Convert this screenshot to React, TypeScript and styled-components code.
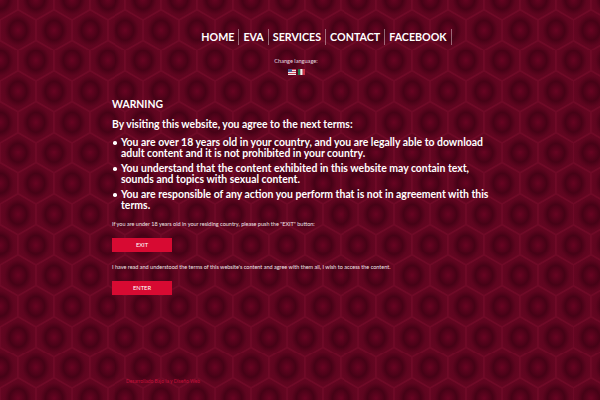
import React from "react";
import styled, { createGlobalStyle } from "styled-components";

const hexCentres = [
  [18, 30],
  [53.85, 30],
  [0, 60.7],
  [35.85, 60.7],
  [71.7, 60.7],
  [0, -0.7],
  [35.85, -0.7],
  [71.7, -0.7],
  [18, 91.4],
  [53.85, 91.4],
];

const hexTile = `<svg xmlns='http://www.w3.org/2000/svg' width='71.7' height='61.4' viewBox='0 0 71.7 61.4'>
<defs>
<radialGradient id='g'><stop offset='0' stop-color='#680422'/><stop offset='0.2' stop-color='#5a031d'/><stop offset='0.48' stop-color='#460216'/><stop offset='0.75' stop-color='#5e051f'/><stop offset='1' stop-color='#640621'/></radialGradient>
<polygon id='h' points='0,-20.4 17.9,-10.2 17.9,10.2 0,20.4 -17.9,10.2 -17.9,-10.2' fill='url(#g)' stroke='#6f0a27' stroke-width='1.3'/>
</defs>
<rect width='71.7' height='61.4' fill='#640621'/>
${hexCentres.map(([x, y]) => `<use href='#h' x='${x}' y='${y}'/>`).join("")}
</svg>`;

const GlobalStyle = createGlobalStyle`
  html, body {
    margin: 0;
    padding: 0;
  }
  body {
    font-family: Lato, "Liberation Sans", sans-serif;
    color: #fff;
    background-color: #640621;
    background-image: url("data:image/svg+xml,${encodeURIComponent(hexTile)}");
  }
`;

const Page = styled.div`
  width: 600px;
  height: 400px;
  overflow: hidden;
  display: flex;
  flex-direction: column;
`;

const Nav = styled.nav`
  display: flex;
  justify-content: center;
  margin: 29px 0 0 49px;
  height: 16px;
`;

const NavItem = styled.a`
  font-size: 10.7px;
  font-weight: 700;
  line-height: 16px;
  padding: 0 4px;
  border-right: 1px solid rgba(255, 255, 255, 0.4);
`;

const LangLabel = styled.div`
  margin: 12px 8px 0 0;
  text-align: center;
  font-size: 5.6px;
  line-height: 8px;
  color: #eadbe0;
`;

const Flags = styled.div`
  display: flex;
  justify-content: center;
  gap: 2px;
  margin: 4px 8px 0 0;
`;

const Content = styled.main`
  margin: 22px 0 0 112px;
  width: 382px;
`;

const Heading = styled.h2`
  margin: 0 0 5px;
  font-size: 10.4px;
  line-height: 15px;
  font-weight: 700;
`;

const Terms = styled.ul`
  margin: 0 0 9px;
  padding: 0 0 0 9px;
  list-style: none;
`;

const Term = styled.li`
  position: relative;
  font-size: 10.45px;
  line-height: 11px;
  font-weight: 700;
  margin-bottom: 4px;

  &::before {
    content: "";
    position: absolute;
    left: -8px;
    top: 4px;
    width: 3.5px;
    height: 3.5px;
    border-radius: 50%;
    background: #fff;
  }
`;

const Note = styled.p`
  margin: 0;
  font-size: 5.5px;
  line-height: 8px;
  color: #f0e4e7;
  white-space: nowrap;
`;

const ActionButton = styled.a`
  display: block;
  width: 60px;
  height: 14px;
  margin: 10px 0 11px;
  background: #d70a32;
  color: #fff;
  text-align: center;
  font-size: 5.8px;
  line-height: 14px;
`;

const Credit = styled.div`
  margin: 72px 0 0 126px;
  font-size: 4.9px;
  line-height: 6px;
  color: #c0103a;
`;

const UsFlag = () => (
  <svg width="8" height="6" viewBox="0 0 8 6">
    <rect width="8" height="6" fill="#eee" />
    <rect width="8" height="1" fill="#c8475a" />
    <rect y="2" width="8" height="1" fill="#c8475a" />
    <rect y="4" width="8" height="1" fill="#c8475a" />
    <rect width="4" height="3" fill="#4a5a94" />
  </svg>
);

const MxFlag = () => (
  <svg width="7" height="6" viewBox="0 0 7 6">
    <rect width="2.3" height="6" fill="#1f7a4a" />
    <rect x="2.3" width="2.4" height="6" fill="#f2f2f2" />
    <rect x="4.7" width="2.3" height="6" fill="#cc3344" />
  </svg>
);

const navLinks = ["HOME", "EVA", "SERVICES", "CONTACT", "FACEBOOK"];

const terms = [
  "You are over 18 years old in your country, and you are legally able to download adult content and it is not prohibited in your country.",
  "You understand that the content exhibited in this website may contain text, sounds and topics with sexual content.",
  "You are responsible of any action you perform that is not in agreement with this terms.",
];

const App = () => {
  return (
    <Page>
      <GlobalStyle />
      <Nav>
        {navLinks.map((link) => (
          <NavItem key={link}>{link}</NavItem>
        ))}
      </Nav>
      <LangLabel>Change language:</LangLabel>
      <Flags>
        <UsFlag />
        <MxFlag />
      </Flags>
      <Content>
        <Heading>WARNING</Heading>
        <Heading>By visiting this website, you agree to the next terms:</Heading>
        <Terms>
          {terms.map((term) => (
            <Term key={term}>{term}</Term>
          ))}
        </Terms>
        <Note>If you are under 18 years old in your residing country, please push the "EXIT" button:</Note>
        <ActionButton>EXIT</ActionButton>
        <Note>I have read and understood the terms of this website's content and agree with them all, I wish to access the content.</Note>
        <ActionButton>ENTER</ActionButton>
      </Content>
      <Credit>Desarrollado Bajo la y Diseño Web</Credit>
    </Page>
  );
};

export default App;
